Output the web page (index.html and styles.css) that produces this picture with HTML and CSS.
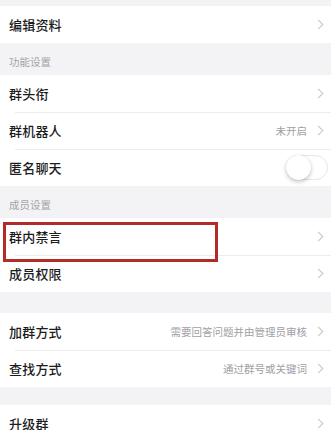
FILE: index.html
```html
<!DOCTYPE html>
<html>
<head>
    <meta charset="utf-8">
    <title>群设置</title>
    <link rel="stylesheet" href="styles.css">
</head>
<body>
    <div class="gap gap-top"></div>

    <div class="group">
        <div class="row">
            <span class="title">编辑资料</span>
            <span class="chevron"></span>
        </div>
    </div>

    <div class="section-header">功能设置</div>
    <div class="group">
        <div class="row">
            <span class="title">群头衔</span>
            <span class="chevron"></span>
        </div>
        <div class="row">
            <span class="title">群机器人</span>
            <span class="value">未开启</span>
            <span class="chevron"></span>
        </div>
        <div class="row">
            <span class="title">匿名聊天</span>
            <span class="switch"><span class="knob"></span></span>
        </div>
    </div>

    <div class="section-header">成员设置</div>
    <div class="group">
        <div class="row">
            <span class="title">群内禁言</span>
            <span class="chevron"></span>
            <!-- highlight box drawn over the row -->
            <span class="mark"></span>
        </div>
        <div class="row">
            <span class="title">成员权限</span>
            <span class="chevron"></span>
        </div>
    </div>

    <div class="gap"></div>
    <div class="group">
        <div class="row">
            <span class="title">加群方式</span>
            <span class="value">需要回答问题并由管理员审核</span>
            <span class="chevron"></span>
        </div>
        <div class="row">
            <span class="title">查找方式</span>
            <span class="value">通过群号或关键词</span>
            <span class="chevron"></span>
        </div>
    </div>

    <div class="gap gap-last"></div>
    <div class="group">
        <div class="row">
            <span class="title">升级群</span>
            <span class="chevron"></span>
        </div>
    </div>
</body>
</html>
```

FILE: styles.css
```css
/* Group settings list */
body {
    margin: 0;
    background-color: #f3f3f6;
    font-family: "Noto Sans CJK SC", "Noto Sans", sans-serif;
    color: #1c1c1e;
    overflow: hidden;
}
.gap {
    height: 21px;
}
.gap-top {
    height: 6px;
}
.gap-last {
    height: 18px;
}
.section-header {
    height: 32px;
    box-sizing: border-box;
    padding: 0 0 6px 9px;
    display: flex;
    align-items: flex-end;
    font-size: 10.5px;
    line-height: 14px;
    color: #a3a3a8;
}
.group {
    background-color: #fff;
}
.row {
    position: relative;
    height: 37px;
    display: flex;
    align-items: center;
    padding: 0 7px 0 9px;
}
.row + .row::before {
    content: "";
    position: absolute;
    top: 0;
    left: 15px;
    right: 0;
    border-top: 1px solid #ececef;
}
.title {
    flex: 1;
    font-size: 13px;
    font-weight: 500;
    letter-spacing: 0.2px;
}
.value {
    font-size: 10.5px;
    color: #a0a0a5;
    margin-right: 8px;
}
.chevron {
    width: 6px;
    height: 6px;
    border-top: 1.3px solid #c4c4c8;
    border-right: 1.3px solid #c4c4c8;
    transform: rotate(45deg);
    margin-right: 2px;
}
.switch {
    position: relative;
    width: 42px;
    height: 25px;
    box-sizing: border-box;
    margin-right: -4px;
    border: 1.5px solid #e6e6ea;
    border-radius: 13px;
    background-color: #fff;
}
.knob {
    position: absolute;
    top: -1.5px;
    left: -1.5px;
    width: 25px;
    height: 25px;
    border-radius: 50%;
    background-color: #fff;
    box-shadow: 0 2px 4px rgba(0, 0, 0, 0.22), 0 0 1px rgba(0, 0, 0, 0.15);
}
.mark {
    position: absolute;
    top: 4px;
    left: 3px;
    width: 215px;
    height: 40px;
    box-sizing: border-box;
    border: 3px solid #b22b26;
    z-index: 1;
}
```
